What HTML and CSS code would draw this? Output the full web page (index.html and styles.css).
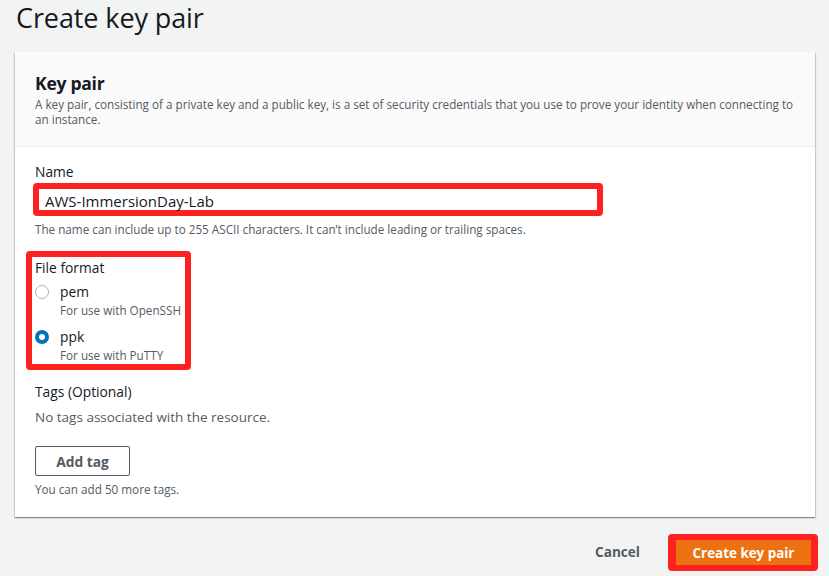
FILE: index.html
```html
<!DOCTYPE html>
<html lang="en">
<head>
<meta charset="utf-8">
<title>Create key pair</title>
<link rel="stylesheet" href="styles.css">
</head>
<body>
<div class="page">
  <h1 class="title">Create key pair</h1>
  <div class="card">
    <div class="card-header">
      <h2 class="card-title">Key pair</h2>
      <p class="card-desc">A key pair, consisting of a private key and a public key, is a set of security credentials that you use to prove your identity when connecting to an instance.</p>
    </div>
    <div class="card-body">
      <div class="field">
        <div class="label">Name</div>
        <div class="input-frame"><div class="input">AWS-ImmersionDay-Lab</div></div>
        <div class="hint">The name can include up to 255 ASCII characters. It can’t include leading or trailing spaces.</div>
      </div>
      <div class="format-frame">
        <div class="label">File format</div>
        <div class="radio-row">
          <span class="radio"></span>
          <div class="radio-text"><div class="radio-label">pem</div><div class="radio-desc">For use with OpenSSH</div></div>
        </div>
        <div class="radio-row">
          <span class="radio checked"></span>
          <div class="radio-text"><div class="radio-label">ppk</div><div class="radio-desc">For use with PuTTY</div></div>
        </div>
      </div>
      <div class="tags">
        <div class="label">Tags (Optional)</div>
        <div class="empty">No tags associated with the resource.</div>
        <button class="btn-normal">Add tag</button>
        <div class="hint">You can add 50 more tags.</div>
      </div>
    </div>
  </div>
  <div class="actions">
    <button class="btn-link">Cancel</button>
    <div class="primary-frame"><button class="btn-primary">Create key pair</button></div>
  </div>
</div>
</body>
</html>
```
FILE: styles.css
```css
* { box-sizing: border-box; }
html, body { margin: 0; padding: 0; }
body {
  background: #f2f3f3;
  font-family: "Open Sans", "Noto Sans", sans-serif;
  color: #16191f;
  width: 829px;
  height: 576px;
  overflow: hidden;
}
.page { padding: 0 14px 0 15px; }
.title {
  margin: 0;
  padding: 0 0 0 1px;
  font-size: 27px;
  font-weight: 400;
  line-height: 36px;
  height: 37px;
  letter-spacing: -0.1px;
}
.card {
  margin-top: 15px;
  width: 800px;
  background: #fff;
  box-shadow: 0 1px 1px 0 rgba(0,28,36,.3), 1px 1px 1px 0 rgba(0,28,36,.15), -1px 1px 1px 0 rgba(0,28,36,.15);
}
.card-header {
  background: #fafafa;
  border-bottom: 1px solid #eaeded;
  padding: 19px 20px 0 20px;
  height: 95px;
}
.card-title {
  margin: 0;
  font-size: 17.6px;
  font-weight: 700;
  line-height: 25px;
  letter-spacing: -0.3px;
}
.card-desc {
  margin: 1px 0 0;
  font-size: 11.7px;
  line-height: 15px;
  color: #545b64;
}
.card-body { padding: 15px 20px 20px 20px; }
.label { font-size: 13.8px; line-height: 20px; }
.input-frame {
  margin: 1px 0 0 -2px;
  width: 570px;
  height: 33px;
  border: 6px solid #fd2121;
  border-radius: 4px;
  background: #fff;
}
.input {
  padding: 3px 0 0 6px;
  font-size: 15px;
  line-height: 18px;
}
.hint { font-size: 11.7px; line-height: 16px; color: #545b64; margin-top: 5px; }
.format-frame {
  margin: 14px 0 0 -9px;
  width: 165px;
  border: 6px solid #fd2121;
  border-radius: 4px;
  padding: 1px 0 1px 3px;
}
.radio-row { display: flex; gap: 11px; margin-top: 4px; }
.radio-row + .radio-row { margin-top: 9px; }
.radio {
  flex: none;
  width: 14px;
  height: 14px;
  margin-top: 3px;
  border-radius: 50%;
  border: 1px solid #aab7b8;
  background: #fff;
}
.radio.checked { border: 4px solid #0073bb; }
.radio-label { font-size: 13.8px; line-height: 20px; }
.radio-desc { font-size: 11.7px; line-height: 16px; color: #545b64; }
.tags { margin-top: 12px; }
.empty { font-size: 13.5px; line-height: 20px; color: #545b64; margin-top: 5px; }
.btn-normal {
  margin-top: 19px;
  display: block;
  width: 95px;
  height: 30px;
  border: 1px solid #545b64;
  border-radius: 2px;
  background: #fff;
  color: #545b64;
  font-family: inherit;
  font-weight: 700;
  font-size: 13.8px;
  padding: 0;
}
.tags .hint { margin-top: 5px; }
.actions {
  display: flex;
  justify-content: flex-end;
  align-items: center;
  gap: 28px;
  margin-top: 17px;
  margin-right: -3px;
}
.btn-link {
  border: 0;
  background: none;
  font-family: inherit;
  font-weight: 700;
  font-size: 13.6px;
  color: #545b64;
  padding: 0 0 2px;
}
.primary-frame {
  border: 6px solid #fd2121;
  border-left-width: 8px;
  border-right-width: 7px;
  border-radius: 4px;
  width: 150px;
  height: 37px;
  background: #fd2121;
}
.btn-primary {
  display: block;
  width: 135px;
  height: 25px;
  border: 0;
  background: #ec7211;
  color: #fff;
  font-family: inherit;
  font-weight: 700;
  font-size: 13.4px;
  padding: 0;
}
```
